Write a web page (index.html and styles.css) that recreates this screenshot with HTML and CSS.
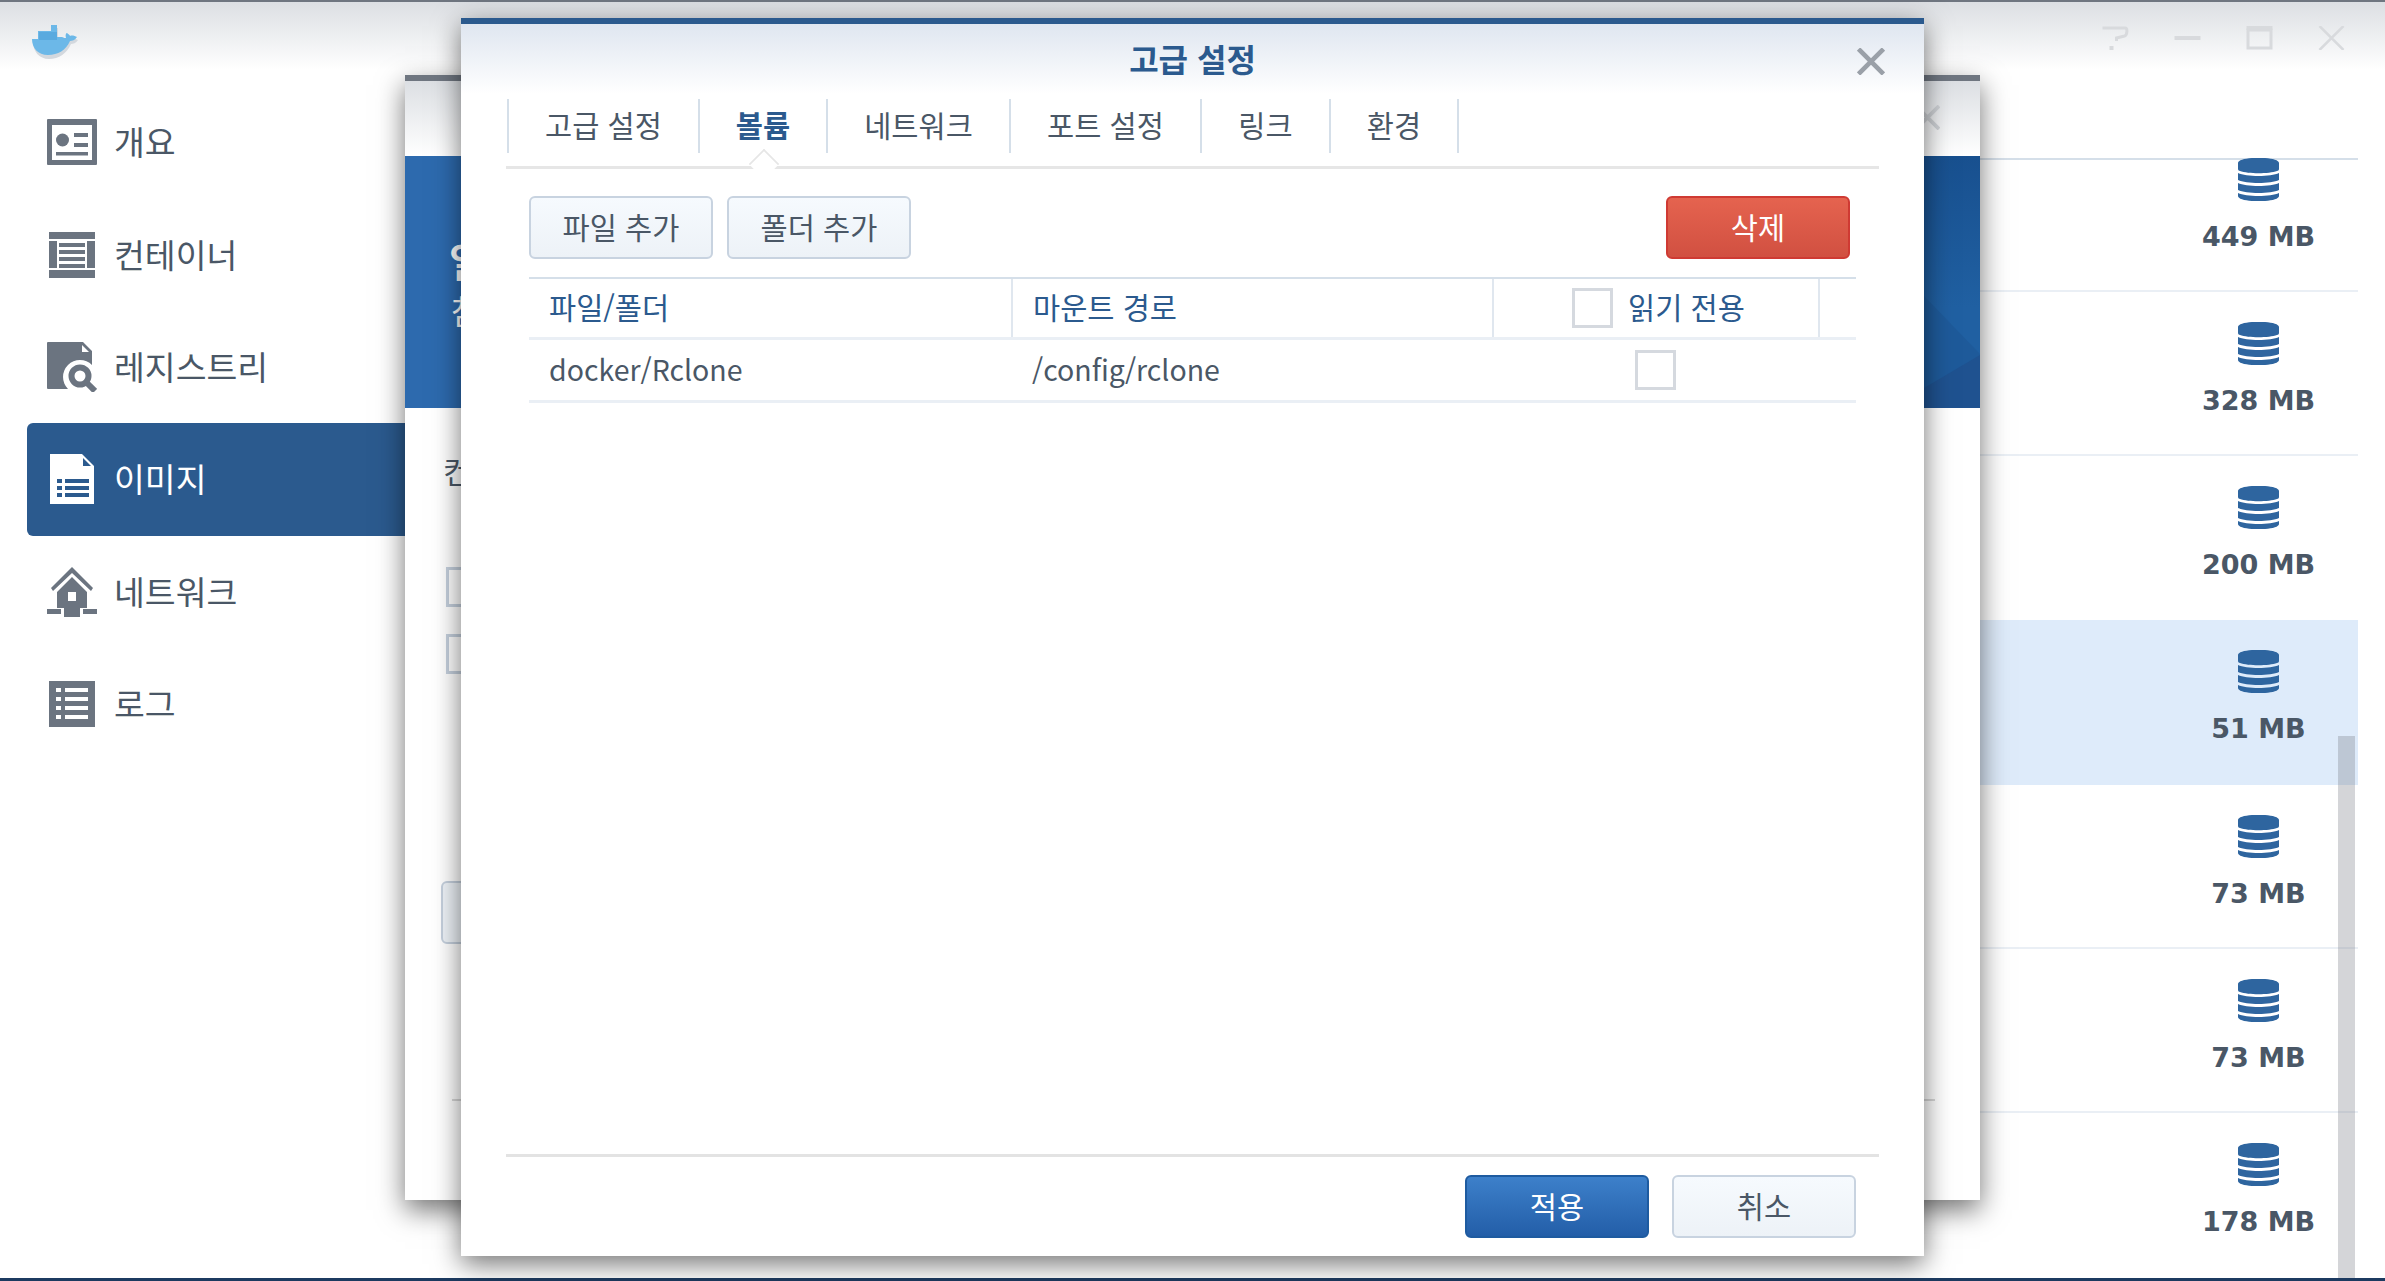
FILE: index.html
```html
<!DOCTYPE html>
<html lang="ko">
<head>
<meta charset="utf-8">
<title>Docker</title>
<link rel="stylesheet" href="styles.css">
</head>
<body>
<div class="app">
  <header class="titlebar">
    <svg class="logo" viewBox="0 0 48 36"><path fill="#d3d8de" d="M3 17H9V9H22V3H28V15H33C35 16 36 16 37 16C36 13 37 11 38 11C39 12 41 13 41 14C43 13 46 14 48 15C46 18 43 19 41 19C37 28 29 34 19 34C9 34 3 26 3 17Z"/><path fill="#6cb8e8" d="M2 14H8V6H21V0H27V12H32C34 13 35 13 36 13C35 10 36 8 37 8C38 9 40 10 40 11C42 10 45 11 47 12C45 15 42 16 40 16C36 25 28 30 18 30C8 30 2 23 2 14Z"/><path fill="#4fa0d8" d="M9 7h18v8H9z" opacity=".6"/></svg>
    <div class="controls">
      <svg viewBox="0 0 26 24"><path fill="none" stroke="#d8dadd" stroke-width="3" d="M0 2h23c2 0 2 7-1 8l-8 2v3"/><path stroke="#d8dadd" stroke-width="4" d="M9 20v4"/></svg>
      <svg viewBox="0 0 26 24"><path stroke="#d8dadd" stroke-width="4" d="M0 12h26"/></svg>
      <svg viewBox="0 0 26 24"><path fill="none" stroke="#d8dadd" stroke-width="3" d="M1.500 4h23v18h-23z"/><path stroke="#d8dadd" stroke-width="4" d="M0 2h26"/></svg>
      <svg viewBox="0 0 26 24"><path stroke="#d8dadd" stroke-width="2.500" d="M1 0l24 24M25 0L1 24"/></svg>
    </div>
  </header>
  <div class="workspace">
    <nav class="sidebar">
      <a class="nav-item">
        <svg class="nav-icon" viewBox="0 0 50 46"><path fill="#6b7480" fill-rule="evenodd" d="M0 1q0-1 1-1h48q1 0 1 1v44q0 1-1 1H1q-1 0-1-1zM5 6v35h40V6z"/><circle cx="15.500" cy="21" r="6.500" fill="#6b7480"/><path fill="#6b7480" d="M27 14h14v4H27zM27 24h14v4H27zM9 33h32v3.500H9z"/></svg>
        <span>개요</span>
      </a>
      <a class="nav-item">
        <svg class="nav-icon" viewBox="0 0 50 46"><path fill="#6b7480" d="M2 0h46v7H2zM2 38h46v8H2zM2 9h8v27H2zM40 9h8v27h-8zM12 11h26v4H12zM12 18h26v4H12zM12 25h26v4H12zM12 32h26v4H12z"/></svg>
        <span>컨테이너</span>
      </a>
      <a class="nav-item">
        <svg class="nav-icon" viewBox="0 0 50 50"><path fill="#6b7480" d="M0 1q0-1 1-1h35l9 9v14a15 15 0 0 0-24 24H1q-1 0-1-1z"/><path fill="#fff" d="M35 3v7h7z"/><circle cx="33" cy="34" r="8.500" fill="none" stroke="#6b7480" stroke-width="6"/><path stroke="#6b7480" stroke-width="6" d="M40 41l8 8"/></svg>
        <span>레지스트리</span>
      </a>
      <a class="nav-item active">
        <svg class="nav-icon" viewBox="0 0 50 50"><path fill="#fff" d="M3 0h32l12 12v38H3z"/><path fill="#2b5a8e" d="M36 4v8h8z"/><path fill="#2b5a8e" d="M10 25h5v4h-5zM18 25h24v4H18zM10 32h5v4h-5zM18 32h24v4H18zM10 39h5v4h-5zM18 39h24v4H18z"/></svg>
        <span>이미지</span>
      </a>
      <a class="nav-item">
        <svg class="nav-icon" viewBox="0 0 50 50"><path fill="#6b7480" d="M25 0l21 21-2 3-19-18-19 18-2-3z"/><path fill="#6b7480" fill-rule="evenodd" d="M25 10l15 15v16H10V25zM21 25v9h8v-9z"/><path fill="#6b7480" d="M0 42h14v5H0zM36 42h14v5H36zM17 40h16v10H17z"/></svg>
        <span>네트워크</span>
      </a>
      <a class="nav-item">
        <svg class="nav-icon" viewBox="0 0 50 46"><path fill="#6b7480" d="M2 0h46v46H2z"/><path fill="#fff" d="M9 7h5v4H9zM18 7h23v4H18zM9 16h5v4H9zM18 16h23v4H18zM9 25h5v4H9zM18 25h23v4H18zM9 34h5v4H9zM18 34h23v4H18z"/></svg>
        <span>로그</span>
      </a>
    </nav>
    <main class="image-list">
      <div class="scroller">
        <div class="image-row first"><svg class="db"><use href="#db-icon"/></svg><b>449 MB</b></div>
        <div class="image-row"><svg class="db"><use href="#db-icon"/></svg><b>328 MB</b></div>
        <div class="image-row"><svg class="db"><use href="#db-icon"/></svg><b>200 MB</b></div>
        <div class="image-row selected"><svg class="db"><use href="#db-icon"/></svg><b>51 MB</b></div>
        <div class="image-row"><svg class="db"><use href="#db-icon"/></svg><b>73 MB</b></div>
        <div class="image-row"><svg class="db"><use href="#db-icon"/></svg><b>73 MB</b></div>
        <div class="image-row"><svg class="db"><use href="#db-icon"/></svg><b>178 MB</b></div>
      </div>
      <div class="scrollbar"></div>
    </main>
  </div>
  <div class="bottom-line"></div>
</div>

<section class="wizard">
  <div class="wizard-head"><svg class="wizard-x" viewBox="0 0 26 26"><path stroke="#cfd2d6" stroke-width="4" d="M1 1l24 24M25 1L1 25"/></svg></div>
  <div class="banner">
    <svg class="banner-art" viewBox="0 0 1575 252" preserveAspectRatio="none"><defs><linearGradient id="bannerShade" x1="0" y1="0" x2="0" y2="1"><stop offset="0" stop-color="#18508f"/><stop offset="0.6" stop-color="#2060a2"/></linearGradient></defs><path fill="url(#bannerShade)" d="M1519 0h56v252h-56z"/><path fill="#1e5a9a" d="M1519 140l56 58v54h-56z"/><path fill="#1f5290" d="M1519 232l56-33v53h-56z"/></svg>
    <strong class="banner-title">일</strong>
    <span class="banner-sub">참</span>
  </div>
  <div class="wizard-body">
    <p class="wizard-label">컨</p>
    <i class="box"></i>
    <i class="box"></i>
    <div class="ghost-btn"></div>
    <div class="wizard-rule"></div>
  </div>
</section>

<section class="dialog">
  <h1 class="dialog-title">고급 설정</h1>
  <svg class="dialog-x" viewBox="0 0 26 26"><path stroke="#9aa0a8" stroke-width="4.500" d="M1 1l24 24M25 1L1 25"/></svg>
  <div class="tabs">
    <span class="tab t1">고급 설정</span>
    <span class="tab t2 current">볼륨</span>
    <span class="tab t3">네트워크</span>
    <span class="tab t4">포트 설정</span>
    <span class="tab t5">링크</span>
    <span class="tab t6">환경</span>
  </div>
  <div class="content">
    <div class="toolbar">
      <button class="btn">파일 추가</button>
      <button class="btn">폴더 추가</button>
      <button class="btn danger">삭제</button>
    </div>
    <div class="table">
      <div class="thead">
        <div class="cell c1">파일/폴더</div>
        <div class="cell c2">마운트 경로</div>
        <div class="cell c3"><i class="check"></i><span>읽기 전용</span></div>
        <div class="cell c4"></div>
      </div>
      <div class="tbody">
        <div class="cell c1">docker/Rclone</div>
        <div class="cell c2">/config/rclone</div>
        <div class="cell c3 center"><i class="check"></i></div>
      </div>
    </div>
  </div>
  <div class="footer">
    <button class="btn primary">적용</button>
    <button class="btn">취소</button>
  </div>
</section>

<svg class="defs" width="0" height="0"><symbol id="db-icon" viewBox="0 0 41 43"><path fill="#2e659f" d="M0 5c0-7 41-7 41 0v6c0 1-1 2-2 2-8 3-29 3-37 0-1 0-2-1-2-2z"/><path fill="#2e659f" d="M0 15c8 4 33 4 41 0v7c-8 4-33 4-41 0zM0 25c8 4 33 4 41 0v7c-8 4-33 4-41 0zM0 35c8 4 33 4 41 0v3c0 7-41 7-41 0z"/></symbol></svg>
</body>
</html>
```
FILE: styles.css
```css
* { box-sizing: border-box; }
html, body { margin: 0; height: 100%; overflow: hidden; }
body {
  background: #fff;
  color: #4a5766;
  font-family: "Noto Sans CJK KR", "Noto Sans", sans-serif;
  position: relative;
  width: 2385px;
  height: 1281px;
}
.app { display: flex; flex-direction: column; height: 1281px; }
.titlebar {
  flex: 0 0 70px;
  border-top: 2px solid #6f7680;
  background: linear-gradient(#dcdfe3, #ffffff);
  display: flex;
  align-items: center;
  justify-content: space-between;
  padding: 0 40px 0 30px;
}
.logo { width: 48px; height: 36px; margin-top: 14px; filter: blur(0.6px); }
.controls { display: flex; gap: 45px; margin-top: 4px; }
.controls svg { width: 27px; height: 24px; }
.workspace { flex: 1; display: flex; min-height: 0; }
.sidebar { flex: 0 0 405px; padding: 16px 0 0 27px; }
.nav-item {
  display: flex;
  align-items: center;
  height: 112.4px;
  padding-left: 20px;
  font-size: 33.500px;
  color: #4a5766;
  border-radius: 6px 0 0 6px;
}
.nav-item span { padding-bottom: 3px; }
.nav-item.active { background: #2b5a8e; color: #fff; }
.nav-icon { width: 50px; height: 50px; margin-right: 17px; flex: none; filter: blur(0.4px); }
.image-list { flex: 1; position: relative; overflow: hidden; padding-top: 88px; padding-right: 27px; }
.scroller { height: 100%; }
.image-row {
  height: 164.2px;
  border-bottom: 2px solid #eaeff5;
  display: flex;
  flex-direction: column;
  align-items: center;
  padding: 30px 0 0 1754px;
  position: relative;
}
.image-row b {
  font-family: "DejaVu Sans", sans-serif;
  font-size: 27px;
  font-weight: 700;
  color: #4a5766;
  margin-top: 17px;
  line-height: 38px;
}
.image-row.first {
  height: 134px;
  border-top: 2px solid #d5dfe9;
  padding-top: 0;
}
.image-row.first .db { margin-top: -2px; height: 43px; }
.image-row.selected { background: #deebfa; border-bottom-color: #deebfa; }
.image-row:nth-child(3) { border-bottom: 0; }
.image-row:nth-child(4) { border-bottom: 0; }
.image-row:last-child { border-bottom: 0; }
.db { width: 41px; height: 43px; display: block; flex: none; }
.scrollbar {
  position: absolute;
  right: 30px;
  top: 666px;
  width: 17px;
  bottom: 0;
  background: rgba(120, 125, 135, 0.32);
}
.bottom-line { flex: 0 0 3px; background: #1c3a60; }

.wizard {
  position: absolute;
  left: 405px;
  top: 75px;
  width: 1575px;
  height: 1125px;
  background: #fff;
  box-shadow: 0 10px 26px rgba(0, 0, 0, 0.55);
  border-top: 6px solid #6f7680;
  overflow: visible;
}
.wizard-head { height: 75px; background: linear-gradient(#dcdfe3, #ffffff); position: relative; }
.wizard-x { position: absolute; right: 40px; top: 24px; width: 25px; height: 25px; }
.banner { height: 252px; background: #2d6aae; position: relative; overflow: hidden; color: #fff; }
.banner-art { position: absolute; inset: 0; width: 100%; height: 100%; }
.banner-title { position: absolute; left: 44px; top: 74px; font-size: 40px; font-weight: 700; line-height: 60px; }
.banner-sub { position: absolute; left: 46px; top: 130px; font-size: 33px; line-height: 48px; }
.wizard-body { position: relative; height: 792px; }
.wizard-label { position: absolute; left: 38px; top: 40px; margin: 0; font-size: 30px; line-height: 44px; }
.box {
  display: block;
  position: absolute;
  left: 41px;
  top: 159px;
  width: 40px;
  height: 40px;
  border: 3px solid #c5d0dd;
}
.box + .box { top: 226px; }
.ghost-btn {
  position: absolute;
  left: 36px;
  top: 473px;
  width: 200px;
  height: 63px;
  border: 2px solid #c5d0dd;
  border-radius: 6px;
  background: #eef3f8;
}
.wizard-rule {
  position: absolute;
  left: 47px;
  right: 45px;
  top: 691px;
  height: 2px;
  background: #d8d8d8;
}

.dialog {
  position: absolute;
  left: 461px;
  top: 18px;
  width: 1463px;
  height: 1238px;
  background: #fff;
  border-top: 6px solid #2b5a8e;
  background-image: linear-gradient(#dfe6f0, #ffffff 70px);
  box-shadow: 0 8px 26px rgba(0, 0, 0, 0.55);
  padding: 0 45px;
  display: flex;
  flex-direction: column;
}
.dialog-title {
  margin: 0;
  height: 75px;
  font-size: 32px;
  line-height: 69px;
  font-weight: 700;
  color: #2b5a8e;
  text-align: center;
}
.dialog-x { position: absolute; right: 39px; top: 24px; width: 28px; height: 27px; }
.tabs {
  display: flex;
  height: 70px;
  border-bottom: 3px solid #e6e6e6;
  position: relative;
  flex: none;
}
.tab {
  height: 54px;
  border-right: 2px solid #d5dfe9;
  font-size: 29.500px;
  line-height: 50px;
  text-align: center;
  color: #4a5766;
  flex: none;
}
.t1 { width: 193px; margin-left: 1px; border-left: 2px solid #d5dfe9; }
.t2 { width: 128px; }
.t3 { width: 183px; }
.t4 { width: 191px; }
.t5 { width: 129px; }
.t6 { width: 128px; }
.tab.current { color: #2b5a8e; font-weight: 700; position: relative; }
.tab.current::after {
  content: "";
  position: absolute;
  left: 50%;
  top: 53px;
  width: 22px;
  height: 22px;
  margin-left: -11px;
  background: #fff;
  transform: rotate(45deg) scale(0.9);
  border: solid #e6e6e6;
  border-width: 2px 0 0 2px;
}
.content { flex: 1; padding: 27px 23px 0; min-height: 0; position: relative; }
.toolbar { display: flex; gap: 14px; height: 63px; }
.btn {
  width: 184px;
  height: 63px;
  border: 2px solid #c8d3e0;
  border-radius: 6px;
  background: linear-gradient(#f6fafe, #edf2f7);
  font: inherit;
  font-size: 29.500px;
  color: #4a5766;
  padding: 0 0 3px;
}
.btn.danger {
  margin-left: auto;
  margin-right: 6px;
  border-color: #cf3a33;
  background: linear-gradient(#e5634f, #d15041);
  color: #fff;
}
.btn.primary {
  border-color: #1e5ba0;
  background: linear-gradient(#3d80ca, #235ea8);
  color: #fff;
}
.table { margin-top: 18px; border-top: 2px solid #d5dfe9; }
.thead, .tbody {
  display: flex;
  height: 63px;
  border-bottom: 3px solid #eaeff5;
  font-size: 28.500px;
  align-items: stretch;
}
.thead { color: #2b5a8e; height: 61px; font-size: 29.500px; }
.cell { display: flex; align-items: center; padding-left: 20px; }
.tbody .c1, .tbody .c2 { padding-bottom: 3px; }
.thead .c1, .thead .c2, .thead .c3 span { padding-bottom: 4px; }
.c1 { width: 482px; }
.c2 { width: 481px; }
.tbody .c2 { padding-left: 21px; }
.c3 { width: 326px; justify-content: center; padding-left: 0; gap: 15px; }
.thead .c3 { padding-left: 5px; }
.thead .c2, .thead .c3, .thead .c4 { border-left: 2px solid #e0e7ef; }
.c4 { width: 38px; }
.check {
  display: block;
  width: 41px;
  height: 40px;
  border: 3px solid #d5d9df;
  background: #fff;
}
.footer {
  flex: none;
  height: 102px;
  border-top: 3px solid #e3e3e3;
  display: flex;
  justify-content: flex-end;
  gap: 23px;
  padding: 18px 23px 0 0;
}
.defs { position: absolute; }
```
